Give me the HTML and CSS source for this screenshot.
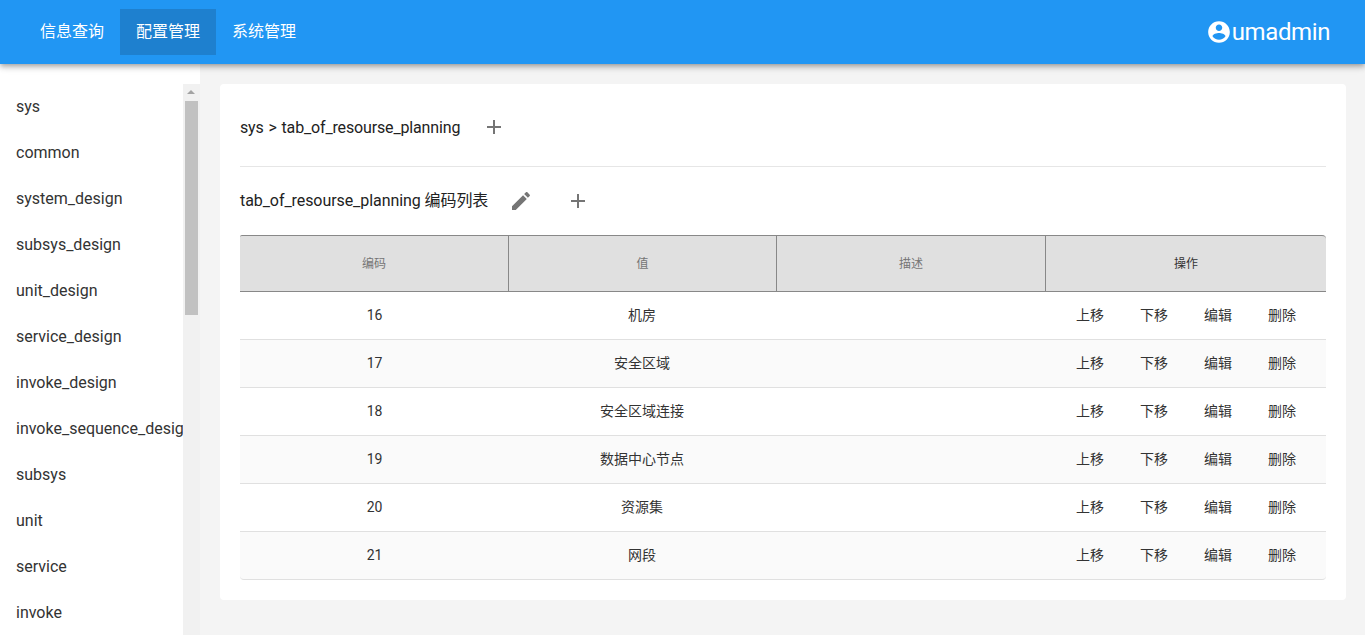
FILE: index.html
```html
<!DOCTYPE html>
<html lang="zh-CN">
<head>
    <meta charset="UTF-8">
    <meta name="viewport" content="width=device-width, initial-scale=1.0">
    <title>配置管理</title>
    <link rel="stylesheet" href="styles.css">
</head>
<body>
    <header class="topbar">
        <nav class="nav">
            <a class="nav-item">信息查询</a>
            <a class="nav-item active">配置管理</a>
            <a class="nav-item">系统管理</a>
        </nav>
        <div class="user">
            <svg class="user-icon" viewBox="0 0 24 24"><path d="M12 2C6.48 2 2 6.48 2 12s4.48 10 10 10 10-4.48 10-10S17.52 2 12 2zm0 3c1.66 0 3 1.34 3 3s-1.34 3-3 3-3-1.34-3-3 1.34-3 3-3zm0 14.2c-2.5 0-4.71-1.28-6-3.22.03-1.99 4-3.08 6-3.08 1.99 0 5.97 1.09 6 3.08-1.29 1.94-3.5 3.22-6 3.22z"/></svg>
            <span>umadmin</span>
        </div>
    </header>

    <div class="page">
        <aside class="sidebar">
            <ul class="side-list">
                <li>sys</li>
                <li>common</li>
                <li>system_design</li>
                <li>subsys_design</li>
                <li>unit_design</li>
                <li>service_design</li>
                <li>invoke_design</li>
                <li>invoke_sequence_design</li>
                <li>subsys</li>
                <li>unit</li>
                <li>service</li>
                <li>invoke</li>
            </ul>
            <div class="scrollbar">
                <div class="scroll-up"></div>
                <div class="scroll-thumb"></div>
            </div>
        </aside>

        <main class="main">
            <section class="card">
                <div class="crumb-row">
                    <span class="crumb">sys &gt; tab_of_resourse_planning</span>
                    <svg class="icon crumb-add" viewBox="0 0 24 24"><path d="M19 13h-6v6h-2v-6H5v-2h6V5h2v6h6v2z"/></svg>
                </div>
                <div class="title-row">
                    <span class="title">tab_of_resourse_planning 编码列表</span>
                    <svg class="icon title-edit" viewBox="0 0 24 24"><path d="M3 17.25V21h3.75L17.81 9.94l-3.75-3.75L3 17.25zM20.71 7.04c.39-.39.39-1.02 0-1.41l-2.34-2.34c-.39-.39-1.02-.39-1.41 0l-1.83 1.83 3.75 3.75 1.83-1.83z"/></svg>
                    <svg class="icon title-add" viewBox="0 0 24 24"><path d="M19 13h-6v6h-2v-6H5v-2h6V5h2v6h6v2z"/></svg>
                </div>
                <table class="code-table">
                    <colgroup>
                        <col class="col-a">
                        <col class="col-b">
                        <col class="col-c">
                        <col class="col-d">
                    </colgroup>
                    <thead>
                        <tr>
                            <th>编码</th>
                            <th>值</th>
                            <th>描述</th>
                            <th class="th-ops">操作</th>
                        </tr>
                    </thead>
                    <tbody>
                        <tr>
                            <td>16</td><td>机房</td><td></td>
                            <td><div class="ops"><a>上移</a><a>下移</a><a>编辑</a><a>删除</a></div></td>
                        </tr>
                        <tr>
                            <td>17</td><td>安全区域</td><td></td>
                            <td><div class="ops"><a>上移</a><a>下移</a><a>编辑</a><a>删除</a></div></td>
                        </tr>
                        <tr>
                            <td>18</td><td>安全区域连接</td><td></td>
                            <td><div class="ops"><a>上移</a><a>下移</a><a>编辑</a><a>删除</a></div></td>
                        </tr>
                        <tr>
                            <td>19</td><td>数据中心节点</td><td></td>
                            <td><div class="ops"><a>上移</a><a>下移</a><a>编辑</a><a>删除</a></div></td>
                        </tr>
                        <tr>
                            <td>20</td><td>资源集</td><td></td>
                            <td><div class="ops"><a>上移</a><a>下移</a><a>编辑</a><a>删除</a></div></td>
                        </tr>
                        <tr>
                            <td>21</td><td>网段</td><td></td>
                            <td><div class="ops"><a>上移</a><a>下移</a><a>编辑</a><a>删除</a></div></td>
                        </tr>
                    </tbody>
                </table>
            </section>
        </main>
    </div>
</body>
</html>
```

FILE: styles.css
```css
html, body {
    height: 100%;
}
body {
    margin: 0;
    display: flex;
    flex-direction: column;
    overflow: hidden;
    font-family: Roboto, "Noto Sans CJK SC", sans-serif;
    color: #333;
    background: #f4f4f4;
}

/* top bar */
.topbar {
    position: relative;
    z-index: 2;
    flex: none;
    height: 64px;
    display: flex;
    justify-content: space-between;
    align-items: center;
    padding: 0 35px 0 24px;
    box-sizing: border-box;
    background: #2196f3;
    color: white;
    box-shadow: 0 2px 4px -1px rgba(0, 0, 0, 0.2), 0 4px 5px 0 rgba(0, 0, 0, 0.14), 0 1px 10px 0 rgba(0, 0, 0, 0.12);
}
.nav {
    display: flex;
    align-self: flex-start;
    margin-top: 9px;
}
.nav-item {
    height: 46px;
    line-height: 45px;
    padding: 0 16px;
    font-size: 16px;
}
.nav-item.active {
    background: #1e80cf;
}
.user {
    display: flex;
    align-items: center;
    font-size: 24px;
    letter-spacing: -0.4px;
}
.user-icon {
    width: 26px;
    height: 26px;
    fill: white;
}

.page {
    flex: 1;
    display: flex;
    min-height: 0;
}

/* left list */
.sidebar {
    flex: none;
    width: 200px;
    display: flex;
    padding-top: 20px;
    box-sizing: border-box;
    background: white;
    overflow: hidden;
}
.side-list {
    flex: 1;
    min-width: 0;
    list-style: none;
    margin: 0;
    padding: 0;
    overflow: hidden;
}
.side-list li {
    height: 46px;
    line-height: 46px;
    padding-left: 16px;
    font-size: 16px;
    white-space: nowrap;
}
.scrollbar {
    flex: none;
    width: 17px;
    background: #f1f1f1;
}
.scroll-up {
    width: 0;
    height: 0;
    margin: 6px 0 7px 4px;
    border-left: 4px solid transparent;
    border-right: 4px solid transparent;
    border-bottom: 4px solid #a3a3a3;
}
.scroll-thumb {
    height: 214px;
    margin: 0 2px;
    background: #c1c1c1;
}

/* content */
.main {
    flex: 1;
    padding: 20px 19px 0 20px;
}
.card {
    padding: 0 20px 20px;
    background: white;
    border-radius: 4px;
}
.crumb-row {
    height: 83px;
    display: flex;
    align-items: center;
    border-bottom: 1px solid #e6e6e6;
    box-sizing: border-box;
    padding-top: 4px;
}
.crumb, .title {
    font-size: 16px;
    color: #222;
}
.crumb {
    letter-spacing: -0.15px;
    word-spacing: 1px;
}
.title {
    letter-spacing: -0.07px;
    padding-bottom: 4px;
}
.icon {
    flex: none;
    width: 24px;
    height: 24px;
    fill: #757575;
}
.crumb-add {
    margin-left: 22px;
}
.title-row {
    height: 68px;
    display: flex;
    align-items: center;
}
.title-edit {
    margin-left: 21px;
}
.title-add {
    margin-left: 33px;
}

/* table */
.code-table {
    width: 1086px;
    table-layout: fixed;
    border-collapse: separate;
    border-spacing: 0;
    font-size: 14px;
}
.col-a { width: 269px; }
.col-b { width: 268px; }
.col-c { width: 269px; }
.col-d { width: 280px; }
.code-table th {
    height: 57px;
    padding: 0 0 2px;
    box-sizing: border-box;
    background: #e0e0e0;
    border-top: 1px solid #888;
    border-bottom: 1px solid #888;
    border-right: 1px solid #888;
    font-size: 12px;
    font-weight: normal;
    color: #757575;
}
.code-table th:first-child {
    border-top-left-radius: 2px;
}
.code-table th:last-child {
    border-right: none;
    border-top-right-radius: 4px;
}
.code-table .th-ops {
    color: #333;
}
.code-table td {
    height: 48px;
    padding: 0 0 4px;
    box-sizing: border-box;
    border-bottom: 1px solid #e0e0e0;
    text-align: center;
}
.code-table td:first-child {
    padding-bottom: 2px;
}
.code-table td:nth-child(2) {
    padding-right: 2px;
}
.code-table tbody tr:nth-child(even) td {
    background: #fafafa;
}
.code-table tbody tr:last-child td:first-child {
    border-bottom-left-radius: 4px;
}
.code-table tbody tr:last-child td:last-child {
    border-bottom-right-radius: 4px;
}
.ops {
    display: flex;
    justify-content: center;
    gap: 36px;
}
```
